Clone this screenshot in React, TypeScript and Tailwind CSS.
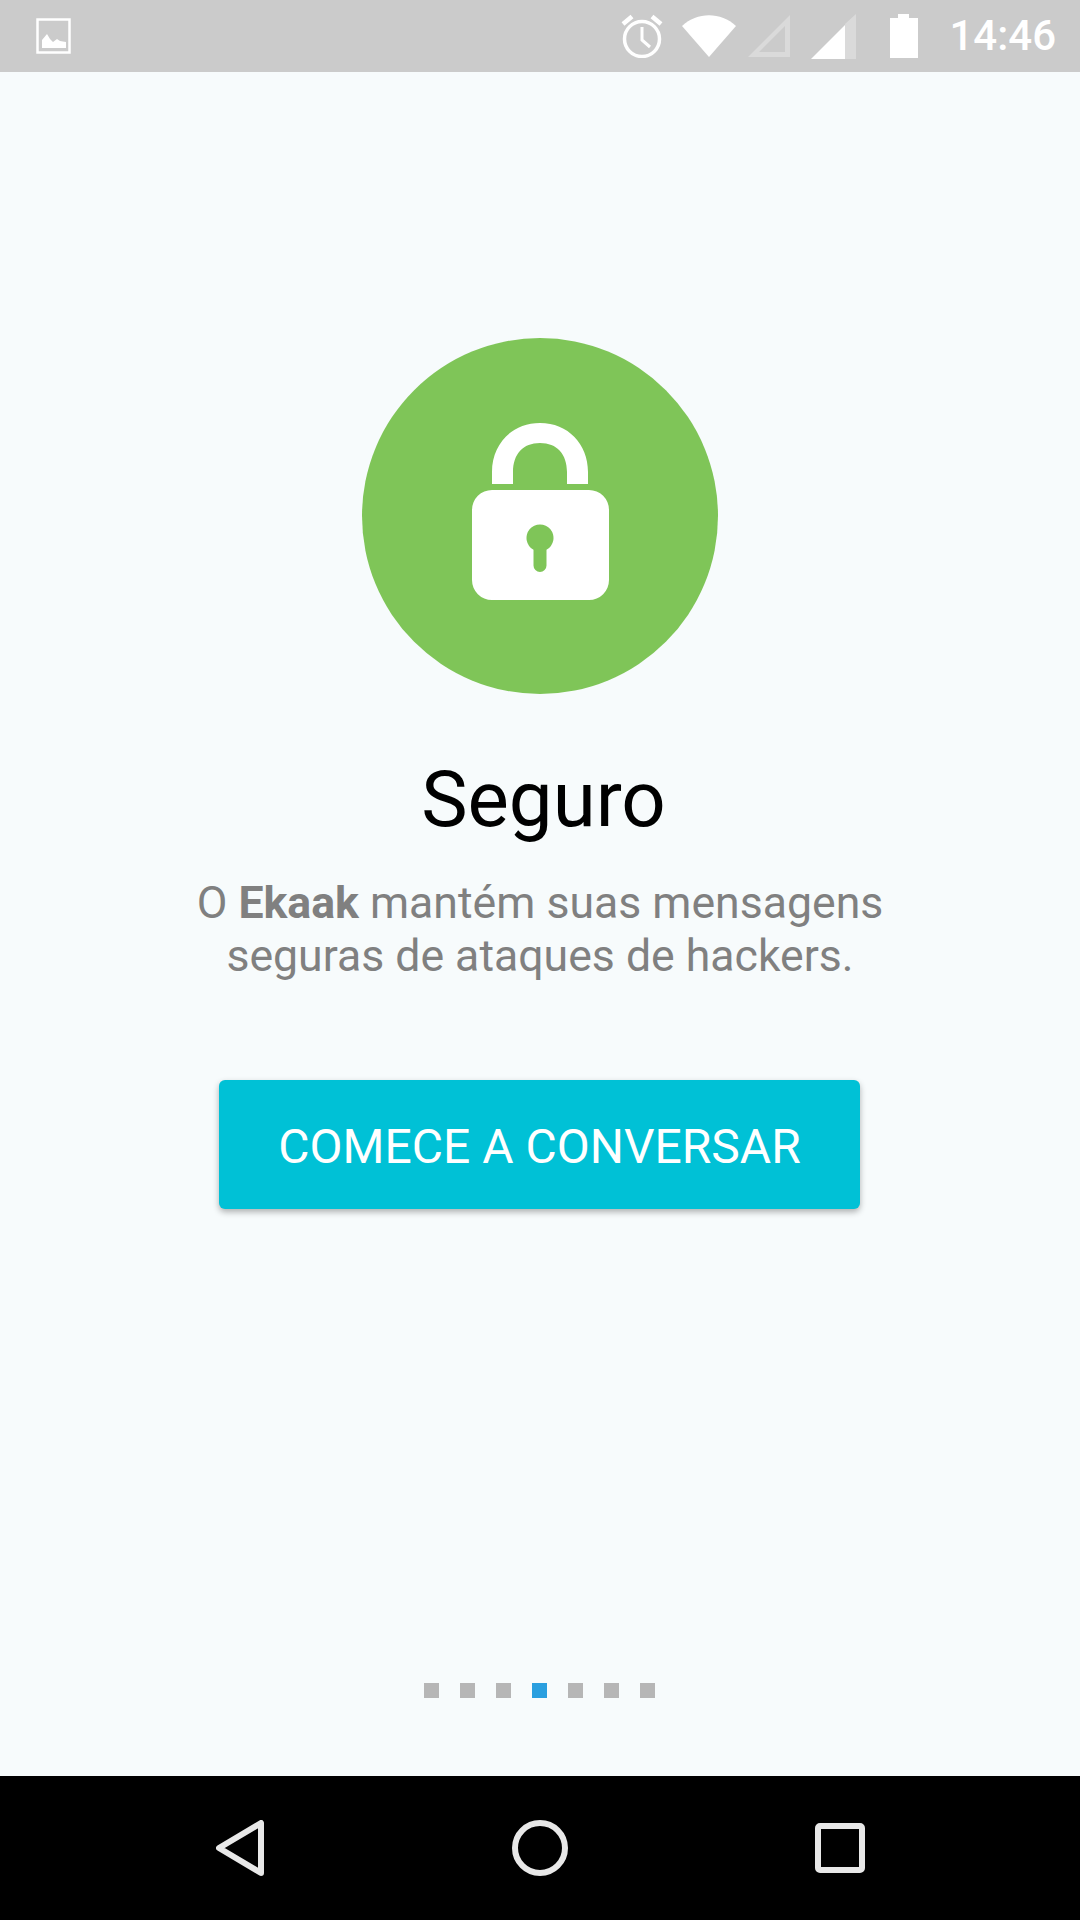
const pageDots = [0, 1, 2, 3, 4, 5, 6];

function StatusBar() {
  return (
    <div className="flex h-[72px] shrink-0 items-center bg-[#cbcbcb] pl-[36px] pr-[24px] text-white">
      {/* notification: picture */}
      <svg width="36" height="36" viewBox="0 0 36 36" className="mr-auto">
        <rect x="1.5" y="1.500" width="32" height="33" fill="none" stroke="#fff" strokeWidth="2.5" />
        <path d="M6 30V22L11 16L14 21L17 24L21 21L24 23L30 24V30Z" fill="#fff" />
      </svg>
      {/* alarm */}
      <svg width="42" height="44" viewBox="0 0 42 44">
        <circle cx="21" cy="25" r="17.5" fill="none" stroke="#fff" strokeWidth="3.5" />
        <path d="M21 13V26L29 33" fill="none" stroke="#fff" strokeWidth="3" />
        <path d="M2 10L11 2.500M40 10L31 2.500" fill="none" stroke="#fff" strokeWidth="4.5" />
      </svg>
      {/* wifi */}
      <svg width="54" height="42" viewBox="0 0 54 42" className="ml-[19px]">
        <path d="M27 42L0 11C15 -3.500 39 -3.500 54 11Z" fill="#fff" />
      </svg>
      {/* signal, first sim, no bars */}
      <svg width="42" height="42" viewBox="0 0 42 42" className="ml-[12px]">
        <path d="M42 0V42H0ZM37 11L11 37H37Z" fill="#fff" fillOpacity="0.3" fillRule="evenodd" />
      </svg>
      {/* signal, second sim */}
      <svg width="45" height="45" viewBox="0 0 45 45" className="ml-[21px]">
        <path d="M45 0V45H34V10Z" fill="#fff" fillOpacity="0.3" />
        <path d="M34 11V45H0Z" fill="#fff" />
      </svg>
      {/* battery */}
      <svg width="28" height="44" viewBox="0 0 28 44" className="ml-[34px]">
        <path d="M8 0H19V4H28V44H0V4H8Z" fill="#fff" />
      </svg>
      <span className="ml-[31px] font-['Roboto',sans-serif] text-[42px] font-medium leading-none">14:46</span>
    </div>
  );
}

function LockBadge() {
  return (
    <div className="flex h-[356px] w-[356px] items-center justify-center rounded-full bg-[#7fc558]">
      <svg width="138" height="179" viewBox="0 0 138 179" className="mb-[9px]">
        <path d="M21 62V50C21 22 41 1 69 1C97 1 117 22 117 50V62H96V50C96 32 86 21 69 21C52 21 42 32 42 50V62Z" fill="#fff" />
        <path
          fillRule="evenodd"
          d="M21 68H118A20 20 0 0 1 138 88V158A20 20 0 0 1 118 178H21A20 20 0 0 1 1 158V88A20 20 0 0 1 21 68ZM62.500 127.800V143.500A6.500 6.500 0 0 0 75.500 143.500V127.800A13.500 13.500 0 1 0 62.500 127.800Z"
          fill="#fff"
        />
      </svg>
    </div>
  );
}

function NavBar() {
  return (
    <div className="flex h-[144px] shrink-0 items-center bg-black pl-[216px] pr-[215px]">
      <svg width="48" height="56" viewBox="0 0 48 56" className="mr-auto">
        <path d="M45 3V53L3 28Z" fill="none" stroke="#e8e8e8" strokeWidth="6" strokeLinejoin="round" />
      </svg>
      <svg width="56" height="56" viewBox="0 0 56 56" className="mr-auto">
        <circle cx="28" cy="28" r="25" fill="none" stroke="#e8e8e8" strokeWidth="6" />
      </svg>
      <svg width="50" height="50" viewBox="0 0 50 50">
        <rect x="3" y="3" width="44" height="44" rx="2" fill="none" stroke="#e8e8e8" strokeWidth="6" />
      </svg>
    </div>
  );
}

export default function App() {
  return (
    <div className="flex h-[1920px] w-[1080px] flex-col overflow-hidden bg-[#f7fbfc] font-['Roboto',sans-serif]">
      <StatusBar />
      <main className="flex flex-1 flex-col items-center pt-[266px]">
        <LockBadge />
        <h1 className="mt-[60px] pl-[7px] text-[78px] font-normal leading-[92px] text-black">Seguro</h1>
        <p className="mt-[31px] text-center text-[44.6px] leading-[53px] text-[#808080]">
          O <strong className="font-bold">Ekaak</strong> mantém suas mensagens
          <br />
          seguras de ataques de hackers.
        </p>
        <button className="mr-[1px] mt-[97px] flex h-[129px] w-[641px] items-center justify-center rounded-[6px] bg-[#00c1d6] pt-[4px] text-[48px] text-white shadow-[0_3px_6px_rgba(0,0,0,0.3)]">
          COMECE A CONVERSAR
        </button>
        <div className="mr-[2px] mt-auto flex gap-[21px] pb-[78px]">
          {pageDots.map((i) => (
            <div key={i} className={i === 3 ? "h-[15px] w-[15px] bg-[#2a9fdf]" : "h-[15px] w-[15px] bg-[#b6b6b6]"} />
          ))}
        </div>
      </main>
      <NavBar />
    </div>
  );
}
